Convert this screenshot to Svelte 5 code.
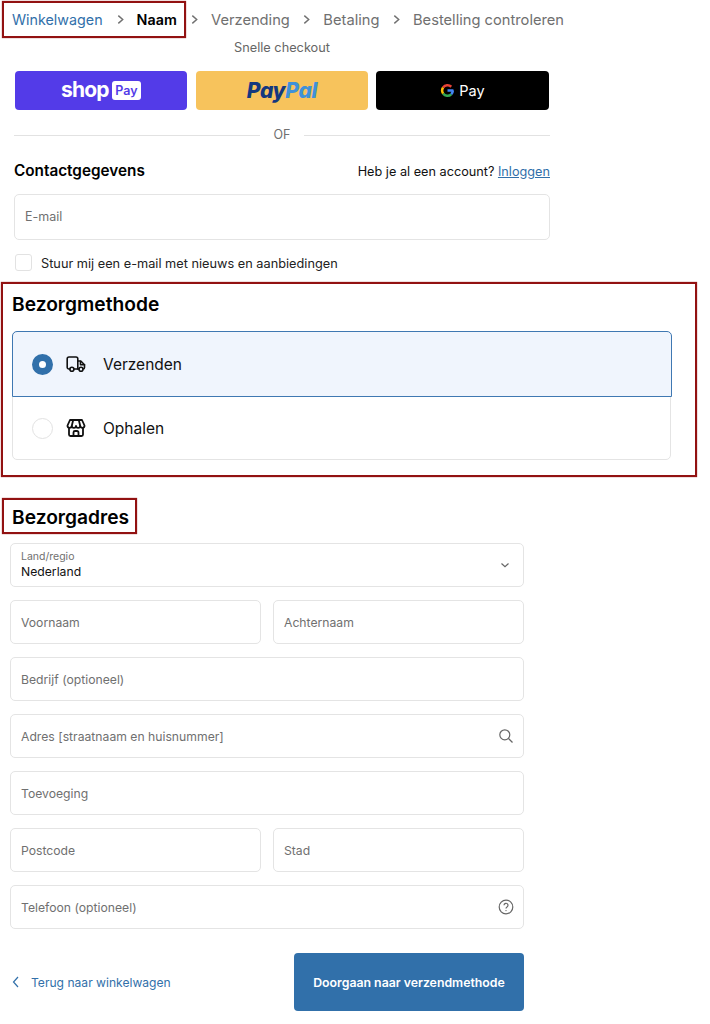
<script>
  const steps = ["Verzending", "Betaling", "Bestelling controleren"];
  const rows = [
    [{ label: "Voornaam" }, { label: "Achternaam" }],
    [{ label: "Bedrijf (optioneel)" }],
    [{ label: "Adres [straatnaam en huisnummer]", icon: "search" }],
    [{ label: "Toevoeging" }],
    [{ label: "Postcode" }, { label: "Stad" }],
    [{ label: "Telefoon (optioneel)", icon: "help" }]
  ];
</script>

<div class="page">
  <nav class="crumbs">
    <div class="crumb-box">
      <span class="link">Winkelwagen</span>
      <svg class="chev" viewBox="0 0 10 10"><path d="M3 1.500 7 5 3 8.500" /></svg>
      <span class="current">Naam</span>
    </div>
    {#each steps as step}
      <svg class="chev" viewBox="0 0 10 10"><path d="M3 1.500 7 5 3 8.500" /></svg>
      <span class="step">{step}</span>
    {/each}
  </nav>

  <div class="contact">
    <div class="quick">Snelle checkout</div>
    <div class="pay-row">
      <div class="pay shop">
        <span class="shop-word">shop</span><span class="shop-badge">Pay</span>
      </div>
      <div class="pay paypal"><span class="pp1">Pay</span><span class="pp2">Pal</span></div>
      <div class="pay gpay">
        <svg viewBox="0 0 24 24" width="15" height="15" fill="none" stroke-width="4">
          <path d="M12 12h9.500" stroke="#4285f4" />
          <path d="M20.500 12a8.500 8.500 0 0 1-2.600 6.100" stroke="#4285f4" />
          <path d="M17.900 18.100A8.500 8.500 0 0 1 5 16.800" stroke="#34a853" />
          <path d="M5 16.800a8.500 8.500 0 0 1 0-9.600" stroke="#fbbc04" />
          <path d="M5 7.200A8.500 8.500 0 0 1 18 6" stroke="#ea4335" />
        </svg>
        <span>Pay</span>
      </div>
    </div>

    <div class="divider"><span>OF</span></div>

    <div class="contact-head">
      <h2>Contactgegevens</h2>
      <div class="account">Heb je al een account? <span class="login">Inloggen</span></div>
    </div>
    <div class="field email">E-mail</div>
    <label class="news">
      <span class="checkbox"></span>
      <span class="news-text">Stuur mij een e-mail met nieuws en aanbiedingen</span>
    </label>
  </div>

  <section class="method">
    <h2>Bezorgmethode</h2>
    <div class="options">
      <div class="option selected">
        <span class="radio on"></span>
        <svg class="opt-icon" viewBox="0 0 20 20" fill="none" stroke="#111" stroke-width="1.600" stroke-linejoin="round" stroke-linecap="round">
          <path d="M3.800 15H3a1.800 1.800 0 0 1-1.800-1.800V4.800A1.800 1.800 0 0 1 3 3h7a1.800 1.800 0 0 1 1.800 1.800V15H8" />
          <path d="M11.800 7h3l3.700 3.800v2.700a1.500 1.500 0 0 1-1.500 1.500M13 15h-1.200" />
          <path d="M14.500 7.500v3.300h4" />
          <circle cx="5.900" cy="15.200" r="2" />
          <circle cx="15" cy="15.200" r="2" />
        </svg>
        <span>Verzenden</span>
      </div>
      <div class="option">
        <span class="radio"></span>
        <svg class="opt-icon" viewBox="0 0 20 20" fill="none" stroke="#111" stroke-width="1.800" stroke-linejoin="round" stroke-linecap="round">
          <path d="M4 2h12l2.500 5.500a2.100 2.100 0 0 1-4.250.3 2.100 2.100 0 0 1-4.250 0 2.100 2.100 0 0 1-4.250 0 2.100 2.100 0 0 1-4.250-.3z" />
          <path d="M7.200 2 5.800 7.800M12.800 2l1.400 5.800" />
          <path d="M3 10.500v6A1.500 1.500 0 0 0 4.500 18h11a1.500 1.500 0 0 0 1.500-1.500v-6" />
          <path d="M7.500 18v-3.500A1.500 1.500 0 0 1 9 13h2a1.500 1.500 0 0 1 1.500 1.500V18" />
        </svg>
        <span>Ophalen</span>
      </div>
    </div>
  </section>

  <h2 class="address-title">Bezorgadres</h2>

  <div class="address">
    <div class="field select">
      <div>
        <div class="small">Land/regio</div>
        <div class="value">Nederland</div>
      </div>
      <svg class="icon-sm" viewBox="0 0 10 10"><path d="M1.500 3.500 5 6.800l3.500-3.300" /></svg>
    </div>
    {#each rows as row}
      <div class="row">
        {#each row as f}
          <div class="field">
            <span>{f.label}</span>
            {#if f.icon === "search"}
              <svg class="icon" viewBox="0 0 16 16"><circle cx="6.800" cy="6.800" r="5" /><path d="m10.500 10.500 4 4" /></svg>
            {:else if f.icon === "help"}
              <svg class="icon" viewBox="0 0 16 16">
                <circle cx="8" cy="8" r="6.800" />
                <path d="M6 6.300a2 2 0 1 1 3 1.700c-.7.400-1 .8-1 1.500" />
                <circle class="dot" cx="8" cy="11.600" r=".7" />
              </svg>
            {/if}
          </div>
        {/each}
      </div>
    {/each}

    <div class="actions">
      <div class="back">
        <svg class="back-chev" viewBox="0 0 10 14"><path d="M7 2 2.500 7 7 12" /></svg>
        <span>Terug naar winkelwagen</span>
      </div>
      <div class="submit">Doorgaan naar verzendmethode</div>
    </div>
  </div>
</div>

<style>
  :global(body) {
    margin: 0;
    background: #fff;
  }

  .page {
    width: 710px;
    height: 1024px;
    overflow: hidden;
    box-sizing: border-box;
    padding-top: 1px;
    font-family: Inter, "Liberation Sans", sans-serif;
    color: #000;
  }

  h2 {
    margin: 0;
    font-weight: 600;
  }

  .crumbs {
    display: flex;
    align-items: center;
    height: 37px;
    padding-left: 2px;
    font-size: 14.700px;
    color: #707070;
  }

  .crumb-box {
    display: flex;
    align-items: center;
    box-sizing: border-box;
    width: 184px;
    height: 37px;
    padding-left: 8px;
    border: 2px solid #921212;
    box-shadow: 0 0 1px rgba(146, 18, 18, 0.8);
    font-size: 14.300px;
  }

  .link {
    color: #3170aa;
  }

  .current {
    color: #000;
    font-weight: 600;
  }

  .chev {
    width: 11px;
    height: 11px;
    margin: 0 11px 0 11.500px;
    fill: none;
    stroke: #707070;
    stroke-width: 1.300;
  }

  .crumb-box + .chev {
    margin-left: 3px;
  }

  .crumb-box .chev {
    margin: 0 11px 0 12px;
  }

  .contact {
    margin-left: 14px;
    width: 536px;
  }

  .quick {
    margin-top: 2px;
    text-align: center;
    font-size: 12.750px;
    line-height: 16px;
    color: #666;
  }

  .pay-row {
    display: grid;
    grid-template-columns: 172px 172px 173px;
    gap: 9px;
    margin: 15px 0 0 1px;
    width: 535px;
  }

  .pay {
    display: flex;
    align-items: center;
    justify-content: center;
    height: 39px;
    border-radius: 4px;
  }

  .shop {
    background: #533be8;
    color: #fff;
  }

  .shop-word {
    font-size: 21px;
    font-weight: 700;
    letter-spacing: -0.800px;
    margin-top: -3px;
  }

  .shop-badge {
    margin-left: 3px;
    padding: 0 3.500px;
    height: 19px;
    line-height: 19px;
    font-size: 12.500px;
    font-weight: 600;
    color: #533be8;
    background: #fff;
    border-radius: 3px;
  }

  .paypal {
    background: #f7c35c;
    font-size: 21px;
    font-weight: 800;
    font-style: italic;
    letter-spacing: -0.300px;
  }

  .pp1 {
    color: #14387f;
  }

  .pp2 {
    color: #3f91d9;
  }

  .gpay {
    background: #000;
    color: #fff;
    gap: 4px;
    font-size: 14.500px;
    margin: 0 1px 0 -1px;
  }

  .divider {
    display: flex;
    align-items: center;
    gap: 14px;
    margin-top: 17px;
    font-size: 12.500px;
    line-height: 16px;
    color: #707070;
  }

  .divider::before,
  .divider::after {
    content: "";
    flex: 1;
    height: 1px;
    background: #e2e2e2;
  }

  .contact-head {
    display: flex;
    justify-content: space-between;
    align-items: center;
    margin-top: 17px;
    height: 20px;
  }

  .contact-head h2 {
    font-size: 15.300px;
  }

  .account {
    font-size: 12.700px;
    color: #111;
    margin-top: 2px;
  }

  .login {
    color: #3170aa;
    text-decoration: underline;
  }

  .field {
    display: flex;
    flex: 1;
    align-items: center;
    justify-content: space-between;
    box-sizing: border-box;
    height: 44px;
    padding: 0 10px;
    border: 1px solid #e4e4e4;
    border-radius: 5px;
    font-size: 12.200px;
    color: #707070;
    background: #fff;
  }

  .email {
    height: 46px;
    margin-top: 14px;
    padding-bottom: 2px;
    font-size: 12.500px;
  }

  .news {
    display: flex;
    align-items: center;
    gap: 9px;
    margin: 14px 0 0 1px;
    font-size: 12.750px;
    color: #222;
  }

  .news-text {
    padding-top: 2px;
  }

  .checkbox {
    box-sizing: border-box;
    width: 17px;
    height: 17px;
    border: 1px solid #e2e2e2;
    border-radius: 3px;
  }

  .method {
    box-sizing: border-box;
    width: 696px;
    height: 195px;
    margin: 11px 0 0 1px;
    padding: 8px 0 0 9px;
    border: 2px solid #921212;
    box-shadow: 0 0 1px rgba(146, 18, 18, 0.8);
  }

  .method h2 {
    font-size: 19.200px;
    line-height: 24px;
  }

  .options {
    margin-top: 15px;
    height: 129px;
    box-sizing: border-box;
    border: 1px solid #e4e4e4;
    border-radius: 5px;
    width: 659px;
  }

  .option {
    display: flex;
    align-items: center;
    box-sizing: border-box;
    height: 62px;
    padding-left: 19px;
    font-size: 15.500px;
    color: #111;
  }

  .selected {
    height: 66px;
    margin: -1px -2px 0 -1px;
    padding-left: 19px;
    background: #f0f5fd;
    border: 1px solid #3f78b2;
    border-radius: 5px 5px 0 0;
  }

  .radio {
    box-sizing: border-box;
    width: 21px;
    height: 21px;
    border: 1px solid #e2e2e2;
    border-radius: 50%;
    background: #fff;
  }

  .radio.on {
    border: 7px solid #3170aa;
  }

  .opt-icon {
    width: 20px;
    height: 20px;
    margin: 0 17px 0 13px;
  }

  .address-title {
    box-sizing: border-box;
    width: 135px;
    height: 36px;
    margin: 21px 0 0 2px;
    padding-left: 8px;
    border: 2px solid #921212;
    box-shadow: 0 0 1px rgba(146, 18, 18, 0.8);
    font-size: 19.200px;
    line-height: 34px;
  }

  .address {
    display: flex;
    flex-direction: column;
    gap: 13px;
    width: 514px;
    margin: 9px 0 0 10px;
  }

  .address .field {
    flex: none;
    width: 100%;
  }

  .row {
    display: flex;
    gap: 12px;
  }

  .address .row .field {
    flex: 1;
    width: auto;
  }

  .small {
    font-size: 10.500px;
    line-height: 13px;
    color: #707070;
  }

  .value {
    font-size: 12.200px;
    line-height: 16px;
    padding-top: 1px;
    color: #111;
  }

  .icon,
  .icon-sm {
    fill: none;
    stroke: #666;
    stroke-width: 1.200;
  }

  .icon {
    width: 16px;
    height: 16px;
    margin-right: -1px;
  }

  .icon-sm {
    width: 10px;
    height: 10px;
    margin-right: 3px;
  }

  .dot {
    fill: #666;
    stroke: none;
  }

  .actions {
    display: flex;
    justify-content: space-between;
    align-items: center;
    margin-top: 11px;
  }

  .back {
    display: flex;
    align-items: center;
    gap: 10px;
    padding-left: 1px;
    font-size: 12.100px;
    color: #3170aa;
  }

  .back-chev {
    width: 10px;
    height: 14px;
    fill: none;
    stroke: #3170aa;
    stroke-width: 1.200;
  }

  .submit {
    display: flex;
    align-items: center;
    justify-content: center;
    width: 230px;
    height: 58px;
    border-radius: 4px;
    background: #3170aa;
    color: #fff;
    font-size: 12.300px;
    font-weight: 600;
  }
</style>
